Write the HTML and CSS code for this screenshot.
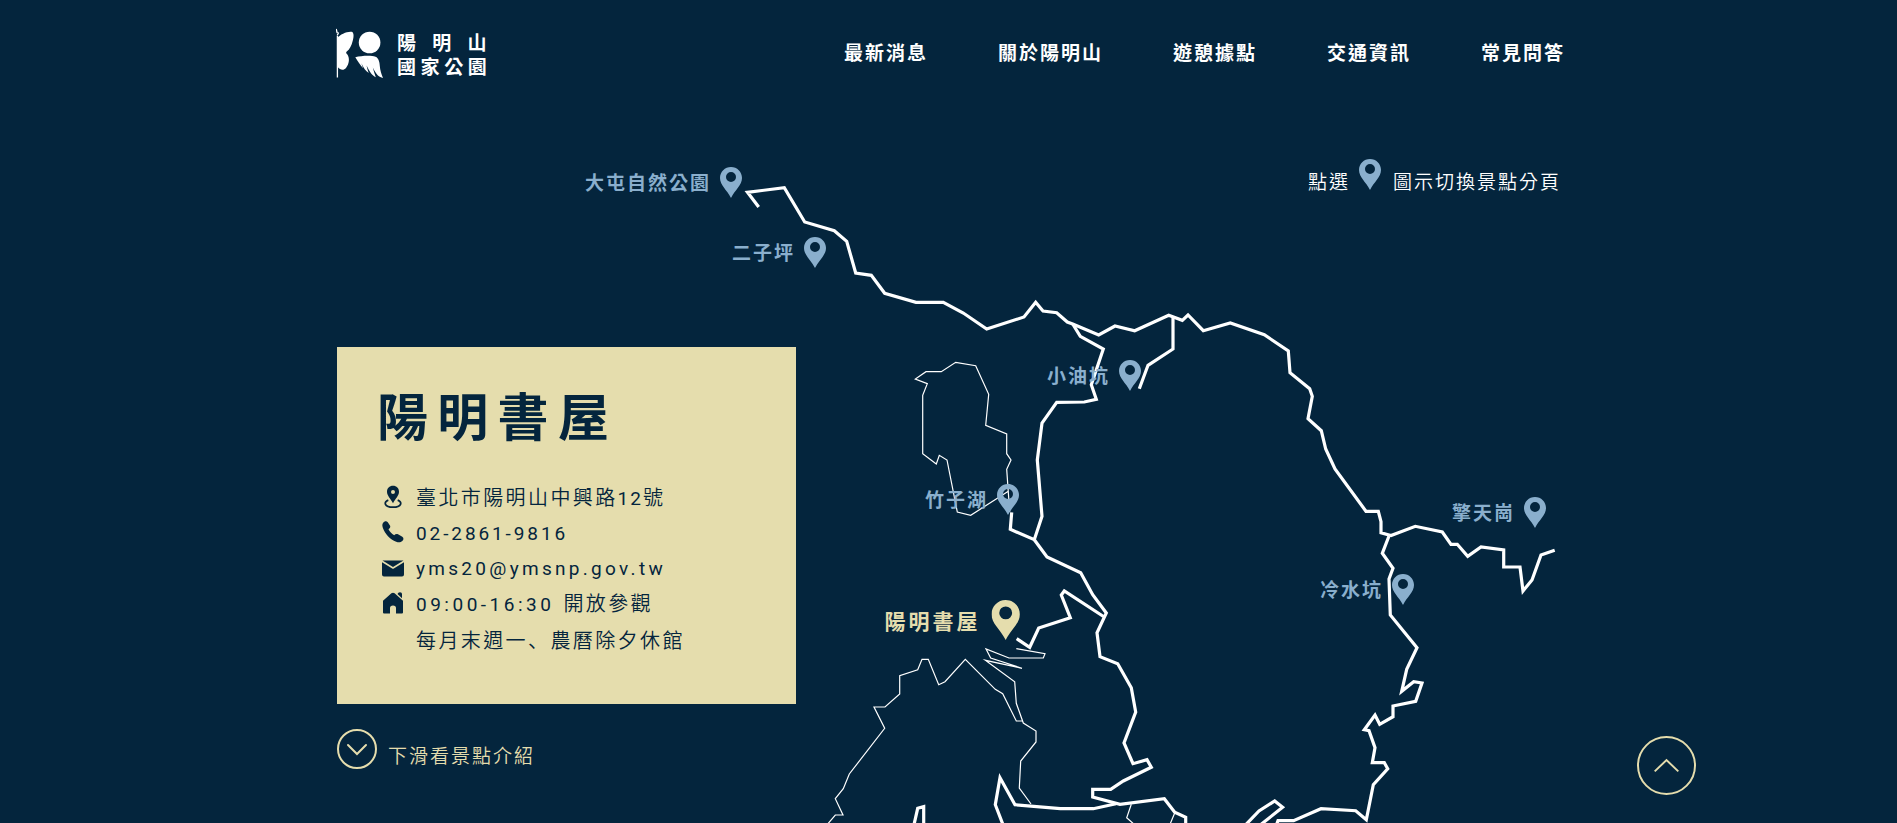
FILE: index.html
```html
<!DOCTYPE html>
<html lang="zh-Hant">
<head>
<meta charset="utf-8">
<title>陽明山國家公園</title>
<link rel="stylesheet" href="styles.css">
</head>
<body>
<svg class="defs" width="0" height="0" aria-hidden="true">
  <symbol id="pin" viewBox="0 0 22 31">
    <path fill="currentColor" fill-rule="evenodd" d="M11 0C4.9 0 0 4.9 0 11C0 18.2 6.8 22.6 11 31C15.2 22.6 22 18.2 22 11C22 4.9 17.1 0 11 0ZM11 5A5 5 0 1 1 11 15A5 5 0 0 1 11 5Z"/>
  </symbol>
</svg>

<svg class="routes" viewBox="0 0 1897 823" aria-hidden="true">
  <g class="road">
    <path d="M758.7 207L747.5 192.3L784.3 187.7L804.7 222L834.3 230.7L846.7 241.3L855.7 273L871.3 275.3L884.7 293.3L916 302.3H943.3L963.3 313L986.7 329L1024 317L1035.7 302.3L1043 311L1056.7 312.7L1067.3 322L1072.7 324L1098.7 335L1115 326L1134.7 330.7L1168.7 315.3L1182.3 320.3L1188 315L1203.3 330.7L1230.3 323L1264.3 334.7L1288.3 351L1290 372.7L1309.7 388.7L1312.3 396.3L1308 418.7L1321.3 430.7L1325.7 449L1335 469L1366 511.3H1378.3L1381 521.7V532.7L1391 535.5L1415.3 526.3L1442.3 532L1451 544.3H1457.3L1467.7 556.3L1481 547L1503.7 550V567H1520L1523 591L1532 580L1541 555L1554.7 550.3"/>
    <path d="M1389 536L1382.3 553.3L1393 568.3L1389 579L1390.3 615L1417 647.7L1406.7 669.3L1401.7 691.3L1413.7 681.7L1422 683L1415.7 701.3L1393 706V716.7L1379.7 724.3L1375 715L1364.3 729.7L1369 730.7L1375 747.7L1372.3 762.7H1384.3L1387.7 768.7L1373.3 784.7L1366.3 819.7L1355.7 810.7L1321 808.7L1293.6 820.7H1278L1276 826"/>
    <path d="M1173 317.7V349L1148 365.3L1139.3 388.7"/>
    <path d="M1072.7 324L1080.3 336.3L1103.3 349L1091.3 384.7L1096.3 399.3L1084.3 402L1056.7 402.3L1042 423L1037.3 460L1042 516.3L1034.3 539.7L1010.3 529.3L1011.7 512.3"/>
    <path d="M1034.3 539.7L1047 557L1080.7 572.7L1092.7 594.7L1106.3 613L1097 632.7L1100 656.7L1117.7 663.7L1131.3 687.7L1135.7 712L1124 743L1133 763.7L1147 759.7L1151.3 767.3L1123.3 781L1110.7 789.3H1092.7V797L1120 804.3L1164.3 798.7L1174.7 812.3L1185.7 817.3V826"/>
    <path d="M1103.5 616.5L1064.3 591L1061.3 595L1070.3 617.7L1038.7 628L1029.7 647.3L1016.7 638.7"/>
    <path d="M1003.5 826L995.3 804.7L1000 777.7L1015 804.7L1060.3 808.7H1093.3L1116 803.7"/>
    <path d="M913.7 826L917.7 808.3L923.7 806.7V826"/>
    <path d="M1244.5 826L1259 811L1274.7 801L1282.6 807.3L1259 826"/>
  </g>
  <g class="trail">
    <path d="M1008.7 491L970.7 515.3L957.3 512L947 460L939.3 455.3L936.3 464L922.7 453.7V395.3L927.3 383.7L915.3 379L926 371.7H941.3L955.7 362.3L975.7 365.7L988.7 394.3L985.7 425.3L1006.7 434V453.7L1011 460L1006.7 469.3L1009.7 512"/>
    <path d="M1016.3 648.7L1045 653.7L1043.3 658H1009L986 649L990.7 658L1022 668.3L985.3 660.3L1014.7 681.7L1016.3 703.3L1023.3 723L1036 731V742L1020.7 761L1019.3 788L1031 804"/>
    <path d="M1022.5 721H1016.3L1002.7 693.7L995.3 689.3L965.3 659.3L945 681.7L938.7 684.7L928.3 659.3H922L917.7 669.7L899.7 675.7V694L885 707H874L884.7 728.3L849.3 774L843.3 788.7L835.3 798.7L843 815H835.3L826 826"/>
    <path d="M1131.3 804.3L1126.7 817.7L1136 826M1174.7 813L1169.3 826"/>
  </g>
</svg>

<div class="page">
  <header class="header">
    <a class="logo">
      <svg class="logo-mark" viewBox="0 0 50 54">
        <path d="M1.4 8V49.5M2.6 4.5L1.2 7.6M0.2 1L1.2 5" fill="none" stroke="#fff" stroke-width="1.3"/>
        <path d="M1.3 10C4 6.5 11 3.3 15.5 3.8C18 4.2 18 8.5 16.8 12.5C15.6 18 13.3 21.5 11 23.3C9.8 24.6 9.9 25 11.2 26.3C14 30 13.3 36 10 40C7.7 42.6 4.5 42.6 1.3 38.5Z" fill="#fff"/>
        <circle cx="33.6" cy="14.5" r="10.8" fill="#fff"/>
        <path d="M19.3 29.3C25 27.8 35 27.3 39.5 28.7C42.7 30 43.6 34 43.8 38C44 42 45.6 46.5 47 49.9C43.1 49.4 40.2 46.5 36.8 39.5C37.8 43.5 38.8 46.5 39.8 49.2C36.2 47.5 33.6 44 30.6 37.5C31.2 40.5 32 43 32.8 45C29.5 43 27.7 40 25.4 35.2L27 40.3C24 37 21.5 32.6 19.3 29.3Z" fill="#fff"/>
      </svg>
      <span class="logo-text"><span class="logo-row wide">陽明山</span><span class="logo-row">國家公園</span></span>
    </a>
    <nav class="nav">
      <a>最新消息</a><a>關於陽明山</a><a>遊憩據點</a><a>交通資訊</a><a>常見問答</a>
    </nav>
  </header>

  <p class="legend"><span>點選</span><svg class="pin"><use href="#pin"/></svg><span>圖示切換景點分頁</span></p>

  <section class="card">
    <h1>陽明書屋</h1>
    <ul class="info">
      <li><svg viewBox="0 0 22 24"><path fill="currentColor" fill-rule="evenodd" d="M11 .8C7.4 .8 5 3.4 5 6.7C5 10.5 8.5 13.5 11 18.2C13.5 13.5 17 10.5 17 6.7C17 3.4 14.6 .8 11 .8ZM11 5A2 2 0 1 1 11 9A2 2 0 0 1 11 5Z"/><path fill="none" stroke="currentColor" stroke-width="1.8" d="M6.3 15.2C1.2 17 2.3 22.2 11 22.2S20.8 17 15.7 15.2"/></svg><span>臺北市陽明山中興路<span class="num">12</span>號</span></li>
      <li><svg viewBox="0 0 22 24"><path fill="currentColor" d="M1 3C2.2 1.3 4.3 .6 5.8 2.2L8.1 5.8C8.7 7.2 7.8 8.3 6.5 9.2C7.7 11.6 9.6 13.7 12.2 15.2C13.3 14 14.6 13.5 16 14.2L20.3 16.7C22 18 21.7 19.7 20.3 21C18.5 22.7 16.4 22.6 14.2 21.7C8 19.3 3 14 .8 7.7C.2 5.8 .1 4.4 1 3Z"/></svg><span class="tel">02-2861-9816</span></li>
      <li><svg viewBox="0 0 22 24"><path fill="currentColor" d="M0 7.2V19.5Q0 21.5 2 21.5H20Q22 21.5 22 19.5V7.2L11.8 13.6Q11 14 10.2 13.6Z"/><path fill="currentColor" d="M.5 5.5H21.5L11 12Z"/></svg><span class="mail">yms20@ymsnp.gov.tw</span></li>
      <li><svg viewBox="0 0 22 24"><path fill="currentColor" d="M1 9.8L9.4 2.3Q11 1 12.6 2.3L21 9.8V21.5Q21 22.5 20 22.5H14V17Q14 14.5 11 14.5T8 17V22.5H2Q1 22.5 1 21.5Z"/><path fill="currentColor" d="M15.5 3Q16 1.2 18 1.2T20 3V7.2Z"/></svg><span><span class="hours">09:00-16:30</span>開放參觀</span></li>
      <li class="note"><span>每月末週一<span class="comma" lang="ja">、</span>農曆除夕休館</span></li>
    </ul>
  </section>

  <a class="scroll">
    <svg viewBox="0 0 40 40"><circle cx="20" cy="20" r="19"/><path d="M11 16L20 25L29 16"/></svg>
    <span>下滑看景點介紹</span>
  </a>
</div>

<div class="poi datun"><span>大屯自然公園</span><svg class="pin"><use href="#pin"/></svg></div>
<div class="poi erziping"><span>二子坪</span><svg class="pin"><use href="#pin"/></svg></div>
<div class="poi xiaoyoukeng"><span>小油坑</span><svg class="pin"><use href="#pin"/></svg></div>
<div class="poi zhuzihu"><span>竹子湖</span><svg class="pin"><use href="#pin"/></svg></div>
<div class="poi qingtiangang"><span>擎天崗</span><svg class="pin"><use href="#pin"/></svg></div>
<div class="poi lengshuikeng"><span>冷水坑</span><svg class="pin"><use href="#pin"/></svg></div>
<div class="poi active"><span>陽明書屋</span><svg class="pin" viewBox="0 0 22 31"><use href="#pin" width="22" height="31"/></svg></div>

<a class="to-top"><svg viewBox="0 0 60 60"><circle cx="30" cy="30" r="29"/><path d="M18 36L30 24.5L42 36"/></svg></a>
</body>
</html>
```
FILE: styles.css
```css
* { box-sizing: border-box; }
body {
  margin: 0;
  height: 823px;
  position: relative;
  overflow: hidden;
  background: #04253d;
  color: #fff;
  font-family: Roboto, "Noto Sans CJK TC", sans-serif;
  font-size: 19px;
  letter-spacing: 2px;
  line-height: 24px;
}
svg { display: block; flex: none; }
.defs { position: absolute; }
.routes { position: absolute; left: -0.5px; top: 0; width: 1897px; height: 823px; }
.road path { fill: none; stroke: #fff; stroke-width: 3.2; stroke-miterlimit: 6; }
.trail path { fill: none; stroke: #fff; stroke-width: 1.2; stroke-miterlimit: 6; }

.page { position: relative; width: 1230px; margin-left: 336px; }
.header { display: flex; justify-content: space-between; height: 159px; padding-top: 28px; }
.logo { display: flex; }
.logo-mark { width: 50px; height: 54px; }
.logo-text { padding: 4px 0 0 11px; }
.logo-row { display: block; font-weight: 700; font-size: 19px; line-height: 24px; letter-spacing: 4.6px; }
.wide { letter-spacing: 16.3px; }
.nav { display: flex; gap: 70px; padding-top: 14px; padding-right: 1px; font-weight: 700; }
.nav a { white-space: nowrap; }

.pin { width: 22px; height: 31px; color: #8aafcd; }
.legend { display: flex; justify-content: flex-end; margin: 0; height: 188px; padding-right: 5px; font-weight: 350; }
.legend span { padding-top: 12px; }
.legend .pin { margin: 0 12px 0 9px; }

.card {
  width: 459px;
  height: 357px;
  margin-left: 1px;
  padding: 36px 0 0 40px;
  background: #e5ddad;
  color: #04253d;
}
.card h1 { margin: 0; font-size: 51px; font-weight: 700; line-height: 72px; letter-spacing: 9.3px; }
.info { list-style: none; margin: 26px 0 0 5px; padding: 0; font-size: 20px; font-weight: 350; letter-spacing: 2.4px; }
.info li { display: flex; gap: 12px; height: 35.2px; line-height: 35.2px; white-space: nowrap; }
.info svg { width: 22px; height: 24px; margin-top: 4px; }
.info .note { padding-left: 34px; }
.comma { font-family: "Noto Sans CJK JP", sans-serif; }
.num, .tel, .mail, .hours { font-size: 19px; font-weight: 400; }
.num { letter-spacing: 2px; }
.tel { letter-spacing: 2.9px; }
.mail { letter-spacing: 3.3px; }
.hours { letter-spacing: 3.5px; margin-right: 9px; }

.scroll { display: flex; gap: 11px; margin: 25px 0 0 1px; color: #e5ddad; font-weight: 350; }
.scroll svg { width: 40px; height: 40px; }
.scroll span { padding-top: 16px; }
.scroll circle, .scroll path { fill: none; stroke: #e5ddad; stroke-width: 2; stroke-linecap: round; }

.poi { position: absolute; display: flex; align-items: center; gap: 9px; height: 31px; color: #8aafcd; font-weight: 700; white-space: nowrap; }
.poi span { padding-top: 3px; }
.datun { right: 1155px; top: 167px; }
.erziping { right: 1071px; top: 237px; }
.xiaoyoukeng { right: 756px; top: 360px; }
.zhuzihu { right: 878px; top: 484px; }
.qingtiangang { right: 351px; top: 497px; }
.lengshuikeng { right: 483px; top: 574px; }
.active { right: 877px; top: 600px; height: 40px; gap: 10px; font-size: 21px; letter-spacing: 3px; color: #e5ddad; }
.active .pin { width: 29.4px; height: 40px; color: #e5ddad; }

.to-top { position: absolute; left: 1637px; top: 736px; }
.to-top svg { width: 59px; height: 59px; }
.to-top circle, .to-top path { fill: none; stroke: #e5ddad; stroke-width: 2; }
```
